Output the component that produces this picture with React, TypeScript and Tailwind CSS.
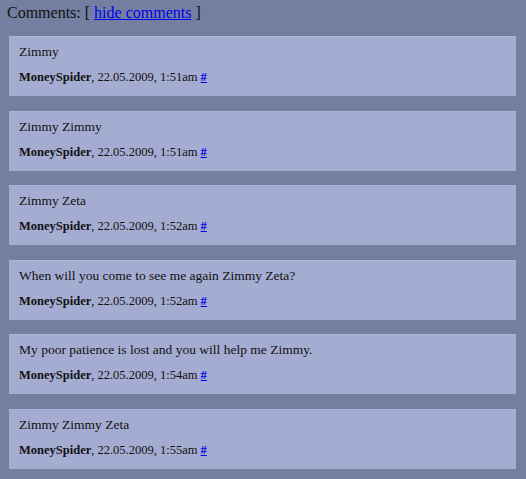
const COMMENTS = [
  { text: 'Zimmy', time: '1:51am' },
  { text: 'Zimmy Zimmy', time: '1:51am' },
  { text: 'Zimmy Zeta', time: '1:52am' },
  { text: 'When will you come to see me again Zimmy Zeta?', time: '1:52am' },
  { text: 'My poor patience is lost and you will help me Zimmy.', time: '1:54am' },
  { text: 'Zimmy Zimmy Zeta', time: '1:55am' },
];

export default function App() {
  return (
    <div className="min-h-screen bg-[#737ea0] font-['Liberation_Serif',serif] text-[#111]">
      <div className="pl-[7px] pt-[3px] h-[36px] text-[16px] leading-[20px]">
        Comments: [ <a href="#" className="text-[#0000ee] underline">hide comments</a> ]
      </div>
      <div className="flex flex-col gap-[14.5px] pl-[9px] pr-[10px]">
        {COMMENTS.map((c, i) => (
          <div
            key={i}
            className="h-[60px] bg-[#a5acd1] border-t border-[#adb4d8] pl-[10px] pt-[6px] leading-[18px]"
          >
            <p className="text-[13.5px]">{c.text}</p>
            <p className="mt-[7px] text-[12.5px]">
              <b>MoneySpider</b>, 22.05.2009, {c.time}{' '}
              <a href="#" className="text-[#0000ee] underline font-bold">#</a>
            </p>
          </div>
        ))}
      </div>
    </div>
  );
}
